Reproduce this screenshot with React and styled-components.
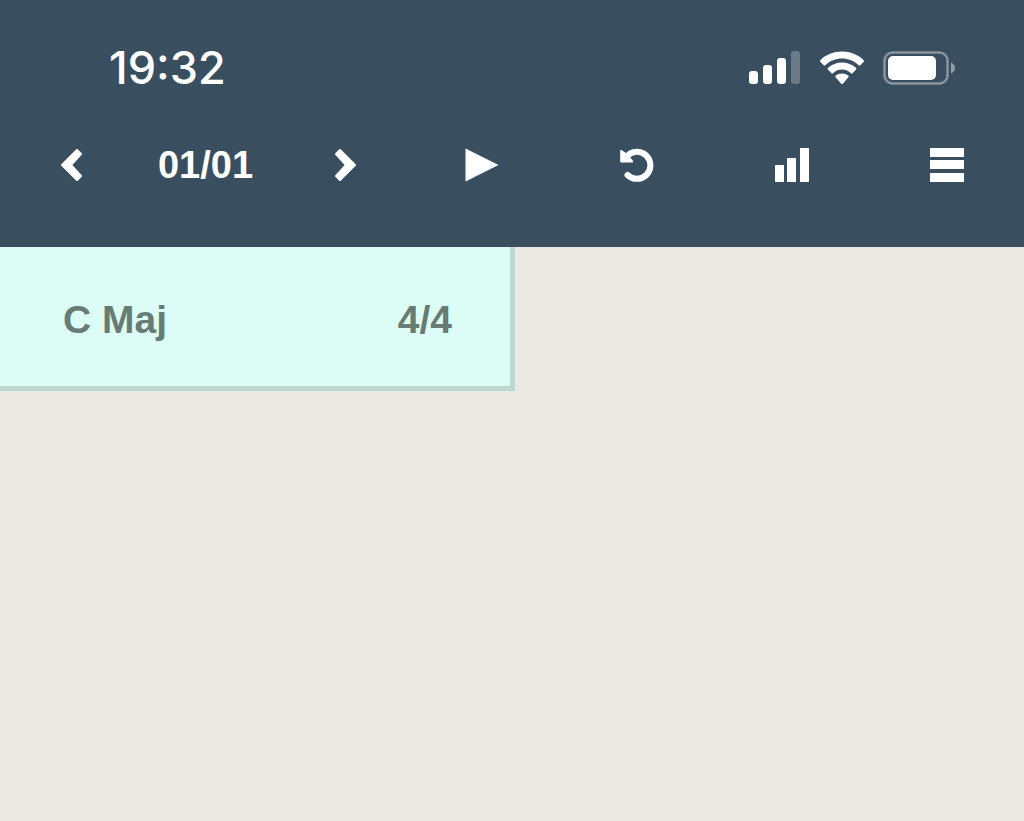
import React from 'react';
import styled, { createGlobalStyle } from 'styled-components';

const GlobalStyle = createGlobalStyle`
* {
  box-sizing: border-box;
}
body {
  margin: 0;
  background: #ebe9e4;
  font-family: 'Liberation Sans', Arial, sans-serif;
}
`;

const Header = styled.header`
  height: 247px;
  padding-top: 36px;
  background: #394f5f;
  color: white;
`;

const StatusBar = styled.div`
  display: flex;
  align-items: center;
  justify-content: space-between;
  height: 64px;
  padding: 0 68px 0 109px;
`;

const Clock = styled.time`
  font-family: Inter, sans-serif;
  font-size: 45px;
  font-weight: 500;
  line-height: 64px;
`;

const StatusIcons = styled.div`
  display: flex;
  align-items: center;
  gap: 19px;
`;

const Toolbar = styled.nav`
  display: grid;
  grid-template-columns: 404fr repeat(4, 155fr);
  align-items: center;
  height: 130px;
`;

const Pager = styled.div`
  display: flex;
  align-items: center;
  justify-content: space-between;
  padding: 0 47px 0 60px;
`;

const PageCount = styled.span`
  padding-right: 6px;
  font-size: 38px;
  font-weight: bold;
  line-height: 48px;
`;

const IconButton = styled.button`
  display: flex;
  align-items: center;
  justify-content: center;
  padding: 0;
  border: 0;
  background: none;
  color: inherit;
  cursor: pointer;
`;

const Icon = styled.svg`
  display: block;
  fill: currentColor;
`;

const Measures = styled.main`
  display: grid;
  grid-template-columns: 515fr 509fr;
`;

const Measure = styled.section`
  display: flex;
  align-items: center;
  justify-content: space-between;
  height: 144px;
  padding: 7px 58px 0 63px;
  border-right: 5px solid #bad7d1;
  border-bottom: 5px solid #bad7d1;
  background: #dcfdf6;
  color: #697b75;
  font-size: 39px;
  font-weight: bold;
  line-height: 48px;
`;

const SignalIcon = () => (
  <Icon width="52" height="34" viewBox="0 0 52 34" aria-hidden="true">
    <rect x="0" y="20" width="9" height="13" rx="3" />
    <rect x="14" y="14" width="9" height="19" rx="3" />
    <rect x="28" y="7" width="9" height="26" rx="3" />
    <rect x="42" y="0" width="9" height="33" rx="3" opacity="0.25" />
  </Icon>
);

const WifiIcon = () => (
  <Icon width="44" height="34" viewBox="0 0 44 34" aria-hidden="true">
    <path d="M22 .5C13.800 .5 6 3.500 .5 9a1.300 1.300 0 0 0 0 1.900l3 3a1.400 1.400 0 0 0 2 0C10 9.800 15.800 7.500 22 7.500s12 2.300 16.500 6.400a1.400 1.400 0 0 0 2 0l3-3a1.300 1.300 0 0 0 0-1.900C38 3.500 30.200 .5 22 .5z" />
    <path d="M22 11.500c-5.300 0-10.200 2-13.900 5.300a1.300 1.300 0 0 0 0 2l3.200 3.100a1.400 1.400 0 0 0 2 0c2.400-2.200 5.400-3.400 8.700-3.400s6.300 1.200 8.700 3.400a1.400 1.400 0 0 0 2 0l3.200-3.100a1.300 1.300 0 0 0 0-2c-3.700-3.300-8.600-5.300-13.900-5.300z" />
    <path d="M22 22.400c-2.300 0-4.600.8-6.200 2.200a1.300 1.300 0 0 0 0 2l5.200 6a1.400 1.400 0 0 0 2 0l5.200-6a1.300 1.300 0 0 0 0-2c-1.600-1.400-3.900-2.200-6.200-2.200z" />
  </Icon>
);

const BatteryIcon = () => (
  <Icon width="73" height="34" viewBox="0 0 73 34" aria-hidden="true">
    <rect x="1.500" y="1.500" width="63" height="31" rx="8" fill="none" stroke="currentColor" strokeWidth="2.500" opacity="0.4" />
    <rect x="5" y="5" width="48" height="24" rx="5" />
    <path d="M68 11.500c2.500 1 4 3.100 4 5.500s-1.500 4.500-4 5.500z" opacity="0.45" />
  </Icon>
);

const App = () => {
  return (
    <>
      <GlobalStyle />
      <Header>
        <StatusBar>
          <Clock>19:32</Clock>
          <StatusIcons>
            <SignalIcon />
            <WifiIcon />
            <BatteryIcon />
          </StatusIcons>
        </StatusBar>
        <Toolbar>
          <Pager>
            <IconButton aria-label="Previous page">
              <Icon width="22" height="34" viewBox="0 0 22 34">
                <path d="M2 17L17 2L21 6L11 17L21 28L17 32z" stroke="currentColor" strokeWidth="2" strokeLinejoin="round" />
              </Icon>
            </IconButton>
            <PageCount>01/01</PageCount>
            <IconButton aria-label="Next page">
              <Icon width="22" height="34" viewBox="0 0 22 34">
                <path d="M20 17L5 2L1 6L11 17L1 28L5 32z" stroke="currentColor" strokeWidth="2" strokeLinejoin="round" />
              </Icon>
            </IconButton>
          </Pager>
          <IconButton aria-label="Play">
            <Icon width="34" height="34" viewBox="0 0 34 34">
              <path d="M.5 .5L33.500 17L.5 33.500z" />
            </Icon>
          </IconButton>
          <IconButton aria-label="Undo">
            <Icon width="34" height="34" viewBox="0 0 34 34">
              <path d="M8 7.200A13.500 13.500 0 1 1 7.500 27" fill="none" stroke="currentColor" strokeWidth="6" strokeLinecap="round" />
              <path d="M1.500 2L6 5L12.500 12Q14 14.500 12 14.500H1Q.2 14.500 .2 13.500V2.500Q.5 1.500 1.500 2z" />
            </Icon>
          </IconButton>
          <IconButton aria-label="Levels">
            <Icon width="34" height="34" viewBox="0 0 34 34">
              <rect x="0" y="17" width="9" height="17" />
              <rect x="12" y="10" width="9" height="24" />
              <rect x="25" y="0" width="9" height="34" />
            </Icon>
          </IconButton>
          <IconButton aria-label="Menu">
            <Icon width="34" height="34" viewBox="0 0 34 34">
              <rect x="0" y="0" width="34" height="9" />
              <rect x="0" y="12" width="34" height="9" />
              <rect x="0" y="25" width="34" height="9" />
            </Icon>
          </IconButton>
        </Toolbar>
      </Header>
      <Measures>
        <Measure>
          <span>C Maj</span>
          <span>4/4</span>
        </Measure>
      </Measures>
    </>
  );
};

export default App;
